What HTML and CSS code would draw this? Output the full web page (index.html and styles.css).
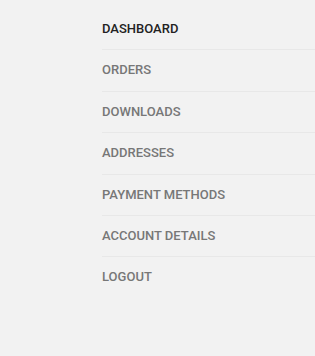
FILE: index.html
```html
<!DOCTYPE html>
<html lang="en">
<head>
  <meta charset="UTF-8">
  <meta name="viewport" content="width=device-width, initial-scale=1.0">
  <title>My Account</title>
  <link rel="stylesheet" href="styles.css">
</head>
<body>
  <div class="account">
    <nav class="account-nav">
      <ul>
        <li class="active"><a href="#">Dashboard</a></li>
        <li><a href="#">Orders</a></li>
        <li><a href="#">Downloads</a></li>
        <li><a href="#">Addresses</a></li>
        <li><a href="#">Payment methods</a></li>
        <li><a href="#">Account details</a></li>
        <li><a href="#">Logout</a></li>
      </ul>
    </nav>
  </div>
</body>
</html>
```

FILE: styles.css
```css
body {
  margin: 0;
  padding: 9px 0;
  font-family: Roboto, "Liberation Sans", sans-serif;
  background-color: #f2f2f2;
}
.account {
  display: flex;
  padding-left: 102px;
}
.account-nav {
  flex: 1;
}
.account-nav ul {
  list-style: none;
  margin: 0;
  padding: 0;
}
.account-nav li {
  padding: 14px 0;
  font-size: 13px;
  line-height: 12.4px;
  border-bottom: 1px solid #e8e8e8;
}
.account-nav li:last-child {
  border-bottom: none;
}
.account-nav a {
  display: block;
  font-weight: 500;
  text-transform: uppercase;
  text-decoration: none;
  color: #777;
}
.account-nav li.active a {
  color: #222;
}
```
